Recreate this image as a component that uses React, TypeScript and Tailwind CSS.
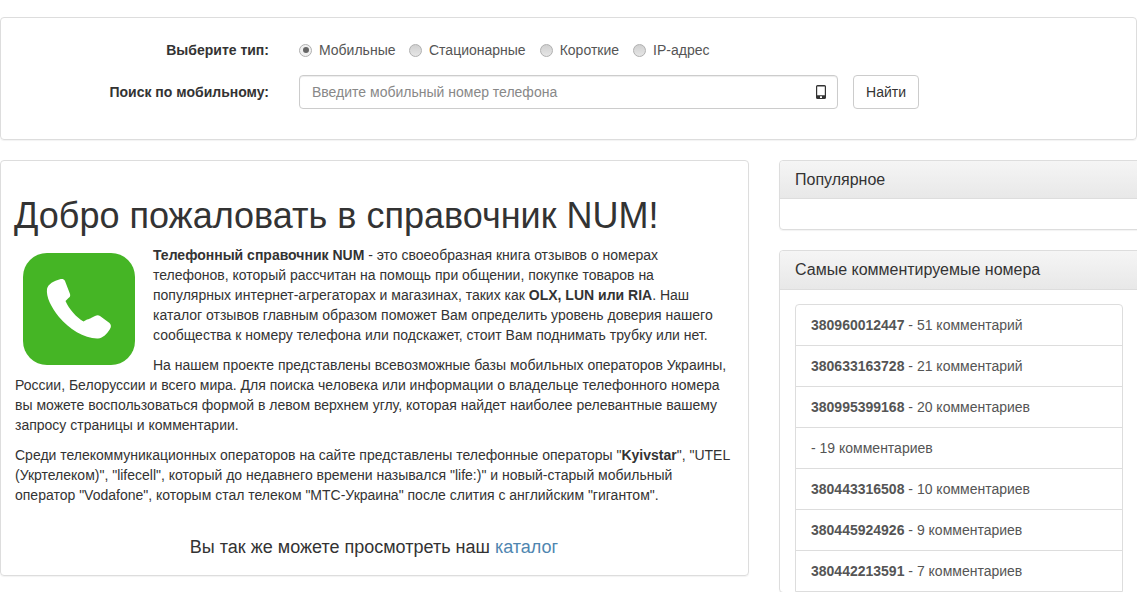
const comments = [
  { num: "380960012447", text: "51 комментарий" },
  { num: "380633163728", text: "21 комментарий" },
  { num: "380995399168", text: "20 комментариев" },
  { num: "", text: "19 комментариев" },
  { num: "380443316508", text: "10 комментариев" },
  { num: "380445924926", text: "9 комментариев" },
  { num: "380442213591", text: "7 комментариев" },
];

const types = ["Мобильные", "Стационарные", "Короткие", "IP-адрес"];

function Radio({ checked }: { checked?: boolean }) {
  return (
    <span className={`w-[13px] h-[13px] rounded-full border border-[#b0b0b0] flex items-center justify-center shrink-0 ${checked ? "bg-[#f0f0f0]" : "bg-gradient-to-b from-[#d0d0d0] to-[#e6e6e6]"}`}>
      {checked && <span className="w-[6px] h-[6px] rounded-full bg-[#666]" />}
    </span>
  );
}

function PhoneLogo() {
  return (
    <div className="float-left ml-2 mr-[18px] mt-2 mb-1 w-[112px] h-[112px] rounded-[24px] bg-[#45b525]">
      <svg viewBox="0 0 112 112" width="112" height="112" fill="#fff">
        <path d="M24 36C25 31 31 28 37 26.300C39 25.800 41 26 42 28L47 41C47.500 43 47 44 45.500 45L42.500 48C46 56 53 64 60.500 68.500L64 66.500C66 66 67 65.500 68 65L72 63C74 62 75.500 62 77 63L86.500 70C88 71.500 88.500 73.500 87 76C84 81 80 85 75 85.500C62 86 46 76 36 64C28 54 23 44 24 36Z" />
      </svg>
    </div>
  );
}

export default function App() {
  return (
    <div className="h-[592px] overflow-hidden bg-white text-[14px] leading-5 text-[#333] font-['Liberation_Sans',Arial,sans-serif]">
      {/* Search */}
      <div className="mt-[17px] h-[123px] border border-[#ddd] rounded-[4px] shadow-[0_1px_1px_rgba(0,0,0,0.05)] pt-[22px]">
        <div className="flex items-center h-5">
          <label className="w-[268px] text-right font-bold">Выберите тип:</label>
          <div className="flex items-center ml-[30px] text-[#555]">
            {types.map((t, i) => (
              <span key={t} className={`flex items-center gap-[7px] ${i === 1 ? "ml-[13.5px]" : i > 1 ? "ml-[14px]" : ""}`}>
                <Radio checked={i === 0} />
                {t}
              </span>
            ))}
          </div>
        </div>
        <div className="flex items-center mt-[15px]">
          <label className="w-[268px] text-right font-bold">Поиск по мобильному:</label>
          <div className="relative ml-[30px] w-[539px]">
            <input
              placeholder="Введите мобильный номер телефона"
              className="w-full h-[34px] border border-[#ccc] rounded-[4px] px-3 shadow-[inset_0_1px_1px_rgba(0,0,0,0.075)] placeholder:text-[#888] outline-none"
            />
            <svg viewBox="0 0 10 14" width="10" height="14" className="absolute right-[12px] top-[10px]">
              <path fillRule="evenodd" fill="#333" d="M1.5 0h7A1.5 1.5 0 0 1 10 1.500v11A1.500 1.500 0 0 1 8.500 14h-7A1.500 1.500 0 0 1 0 12.500v-11A1.500 1.500 0 0 1 1.500 0zM1.200 1.500v8.800h7.600V1.500zM4 11.200v1.800h2v-1.800z" />
            </svg>
          </div>
          <button className="ml-[15px] w-[66px] h-[34px] border border-[#ccc] rounded-[4px] bg-white text-[#333]">
            Найти
          </button>
        </div>
      </div>

      <div className="flex items-start mt-5">
        {/* Welcome */}
        <div className="w-[749px] h-[416px] shrink-0 border border-[#ddd] rounded-[4px] shadow-[0_1px_1px_rgba(0,0,0,0.05)] pl-[14px] pr-[15px] pt-[35px]">
          <h1 className="text-[36px] leading-10 font-normal mb-[10px] -ml-[1px]">Добро пожаловать в справочник NUM!</h1>
          <div className="-mt-[1px]">
            <PhoneLogo />
            <p className="mb-[10px]">
              <b>Телефонный справочник NUM</b> - это своеобразная книга отзывов о номерах телефонов, который рассчитан на помощь при общении, покупке товаров на популярных интернет-агрегаторах и магазинах, таких как <b>OLX, LUN или RIA</b>. Наш каталог отзывов главным образом поможет Вам определить уровень доверия нашего сообщества к номеру телефона или подскажет, стоит Вам поднимать трубку или нет.
            </p>
            <p className="mb-[10px]">
              На нашем проекте представлены всевозможные базы мобильных операторов Украины, России, Белоруссии и всего мира. Для поиска человека или информации о владельце телефонного номера вы можете воспользоваться формой в левом верхнем углу, которая найдет наиболее релевантные вашему запросу страницы и комментарии.
            </p>
            <p>
              Среди телекоммуникационных операторов на сайте представлены телефонные операторы "<b>Kyivstar</b>", "UTEL (Укртелеком)", "lifecell", который до недавнего времени назывался "life:)" и новый-старый мобильный оператор "Vodafone", которым стал телеком "МТС-Украина" после слития с английским "гигантом".
            </p>
          </div>
          <p className="text-center text-[18px] leading-6 mt-[30px]">
            Вы так же можете просмотреть наш <a className="text-[#4f86b0]">каталог</a>
          </p>
        </div>

        {/* Sidebar */}
        <div className="ml-[30px] w-[372px] shrink-0">
          <div className="border border-[#ddd] rounded-[4px] mb-5 shadow-[0_1px_1px_rgba(0,0,0,0.05)]">
            <div className="h-[38px] px-[15px] flex items-center text-[16px] bg-gradient-to-b from-[#f5f5f5] to-[#e8e8e8] border-b border-[#ddd] rounded-t-[4px]">
              Популярное
            </div>
            <div className="h-[30px]" />
          </div>
          <div className="border border-[#ddd] rounded-[4px] shadow-[0_1px_1px_rgba(0,0,0,0.05)]">
            <div className="h-[39px] px-[15px] flex items-center text-[16px] bg-gradient-to-b from-[#f5f5f5] to-[#e8e8e8] border-b border-[#ddd] rounded-t-[4px]">
              Самые комментируемые номера
            </div>
            <div className="pt-[14px] pl-[15px] w-[343px]">
              <ul className="border border-[#ddd] rounded-t-[4px] text-[#555]">
                {comments.map((c, i) => (
                  <li key={i} className={`px-[15px] flex items-center whitespace-pre ${i > 0 ? "h-[41px] border-t border-[#ddd]" : "h-[40px]"}`}>
                    {c.num && <b>{c.num} </b>}- {c.text}
                  </li>
                ))}
              </ul>
            </div>
          </div>
        </div>
      </div>
    </div>
  );
}
